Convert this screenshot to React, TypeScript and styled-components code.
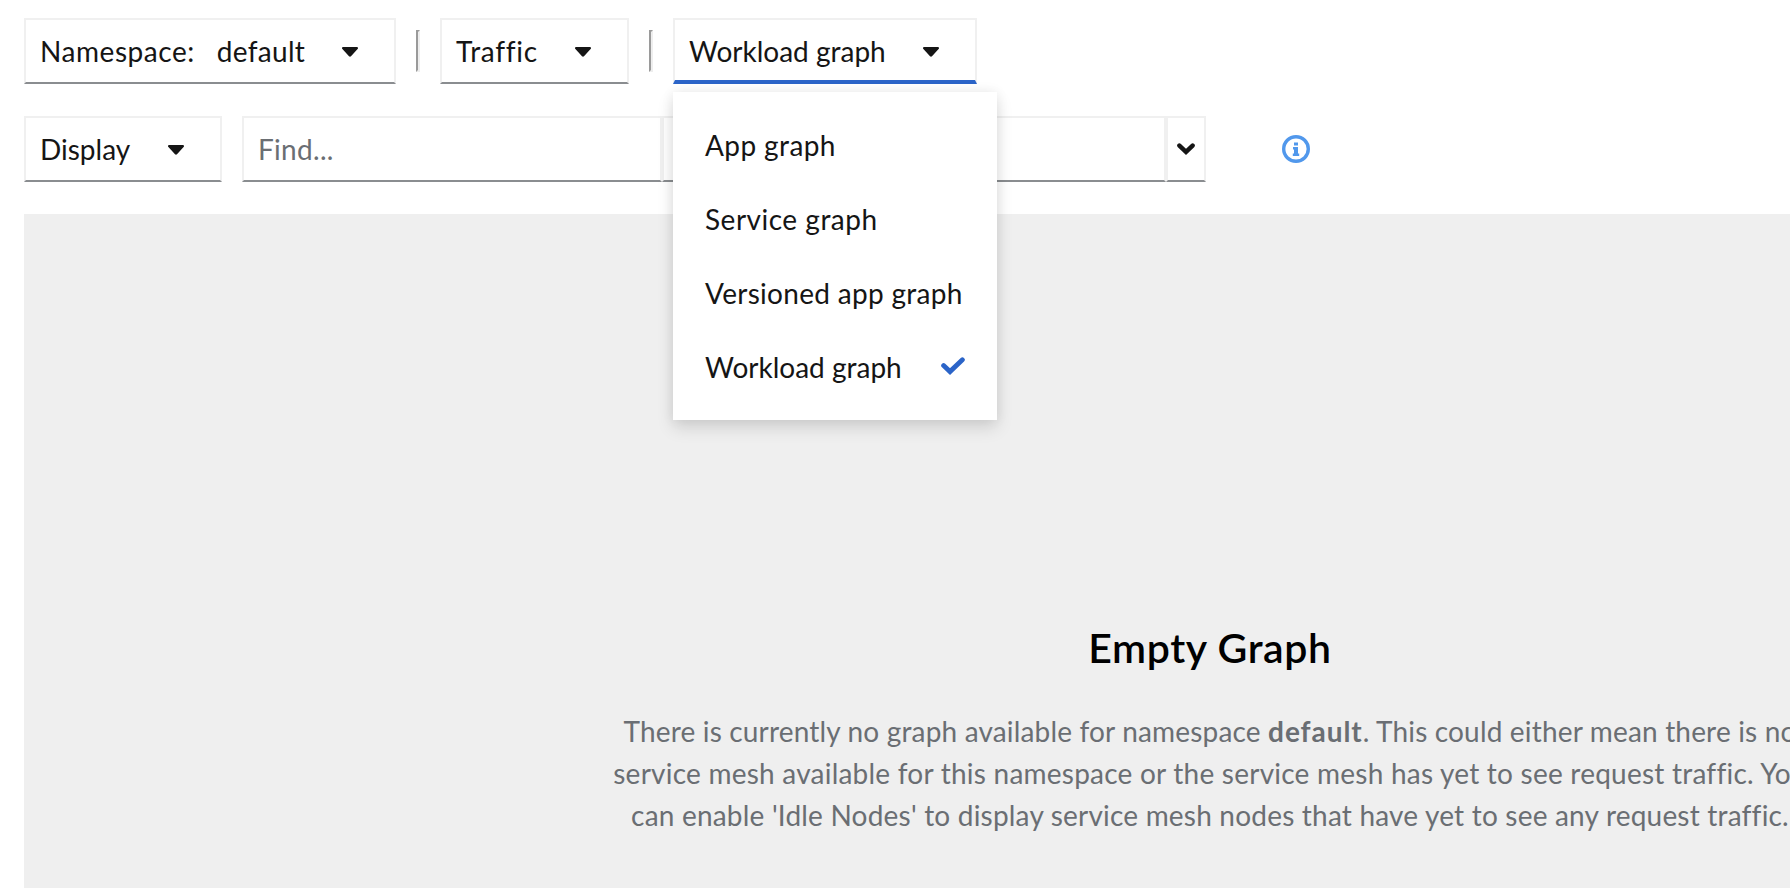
import React from 'react';
import styled, { createGlobalStyle } from 'styled-components';

const Global = createGlobalStyle`
  * { box-sizing: border-box; }
  html, body { margin: 0; height: 100%; overflow: hidden; background: #fff; }
  body { font-family: 'Lato', 'Liberation Sans', sans-serif; font-size: 28px; line-height: 42px; color: #151515; }
`;
const Page = styled.div`
  width: 1790px; height: 888px; padding: 18px 0 0 24px; overflow: hidden;
  display: flex; flex-direction: column;
`;
const Row = styled.div`display: flex; align-items: center; height: 66px; margin-bottom: 32px;`;
const Select = styled.div<{ $w: number; $open?: boolean }>`
  position: relative; flex: none; width: ${p => p.$w}px; height: 66px; background: #fff;
  border: 2px solid #f0f0f0;
  border-bottom: ${p => (p.$open ? '4px solid #2b64c8' : '2px solid #8a8d90')};
  padding: 10px 36px 0 14px; display: flex; align-items: flex-start; justify-content: space-between;
`;
const SelectText = styled.span<{ $ls: number }>`
  white-space: nowrap; letter-spacing: ${p => p.$ls}px;
`;
const SelectValue = styled(SelectText)`margin-left: 22px; margin-right: auto;`;
const CaretSvg = styled.svg`display: block; flex: none; margin-top: 17px;`;
const Caret = () => (
  <CaretSvg width="16" height="10" viewBox="0 0 16 10">
    <path d="M1.3 0H14.7C15.9 0 16.4 1.3 15.6 2.1L9 9.2C8.4 9.8 7.6 9.8 7 9.2L.4 2.1C-.4 1.3.1 0 1.3 0Z" fill="#151515" />
  </CaretSvg>
);
const Divider = styled.div`
  width: 4px; height: 42px; margin: 0 20px; flex: none;
  border: 2px solid; border-color: #9a9a9a #eeeeee #eeeeee #9a9a9a;
`;
const Menu = styled.div`
  position: absolute; z-index: 2; left: -2px; top: 72px; width: 324px; padding: 16px 0; background: #fff;
  box-shadow: 0 8px 16px rgba(3, 3, 3, 0.12), 0 0 12px rgba(3, 3, 3, 0.07);
`;
const MenuItem = styled.div<{ $ls: number }>`
  height: 74px; padding: 16px 32px; display: flex; justify-content: space-between;
  white-space: nowrap; letter-spacing: ${p => p.$ls}px;
`;
const CheckSvg = styled.svg`display: block; flex: none; margin-top: 11px;`;
const Field = styled.div<{ $w: number }>`
  flex: none; width: ${p => p.$w}px; height: 66px; padding: 10px 14px; color: #6a6e73;
  border: 2px solid #f0f0f0; border-bottom-color: #8a8d90; letter-spacing: 0.3px;
`;
const FieldToggle = styled(Field)`padding: 25px 9px;`;
const ChevronSvg = styled.svg`display: block;`;
const FieldGroup = styled.div`display: flex; margin-left: 20px;`;
const Info = styled.svg`display: block; margin-left: 76px;`;
const Canvas = styled.main`
  flex: 1; background: #efefef; padding-top: 408px; display: flex; flex-direction: column; align-items: flex-start;
`;
const Empty = styled.section`
  width: 1200px; margin-left: 586px; text-align: center;
  display: flex; flex-direction: column; align-items: center;
`;
const Title = styled.h1`
  margin: 0 0 36px; font-size: 41px; line-height: 52px; font-weight: 600; color: #000; letter-spacing: 0.6px;
`;
const Line = styled.div<{ $ls: number }>`
  white-space: nowrap; color: #6a6e73; letter-spacing: ${p => p.$ls}px;
`;
const Strong = styled.b`letter-spacing: 0.95px;`;

export default function App() {
  return (
    <>
      <Global />
      <Page>
        <Row>
          <Select $w={372}>
            <SelectText $ls={0.55}>Namespace:</SelectText>
            <SelectValue $ls={0.3}>default</SelectValue>
            <Caret />
          </Select>
          <Divider />
          <Select $w={189}><SelectText $ls={0.7}>Traffic</SelectText><Caret /></Select>
          <Divider />
          <Select $w={304} $open>
            <SelectText $ls={0}>Workload graph</SelectText>
            <Caret />
            <Menu>
              <MenuItem $ls={0.4}>App graph</MenuItem>
              <MenuItem $ls={0.5}>Service graph</MenuItem>
              <MenuItem $ls={0.3}>Versioned app graph</MenuItem>
              <MenuItem $ls={0}>
                Workload graph
                <CheckSvg width="24" height="18" viewBox="0 0 24 18">
                  <path d="M2.6 8.6L9 14.6L21.4 2.8" fill="none" stroke="#2b64c8" strokeWidth="4.8" strokeLinecap="round" />
                </CheckSvg>
              </MenuItem>
            </Menu>
          </Select>
        </Row>
        <Row>
          <Select $w={198}><SelectText $ls={0}>Display</SelectText><Caret /></Select>
          <FieldGroup>
            <Field $w={420}>Find...</Field>
            <Field $w={504} />
            <FieldToggle $w={40}>
              <ChevronSvg width="18" height="12" viewBox="0 0 18 12">
                <path d="M2.4 2.6L9 8.8L15.6 2.6" fill="none" stroke="#151515" strokeWidth="4.5" strokeLinecap="round" />
              </ChevronSvg>
            </FieldToggle>
          </FieldGroup>
          <Info width="28" height="28" viewBox="0 0 28 28">
            <circle cx="14" cy="14" r="12.3" fill="none" stroke="#5198ec" strokeWidth="3.4" />
            <path d="M12 7.4H16V10.4H12ZM11 12H16V18.6H17.2V21H10.8V18.6H12V14.4H11Z" fill="#5198ec" />
          </Info>
        </Row>
        <Canvas>
          <Empty>
            <Title>Empty Graph</Title>
            <Line $ls={0.17}>There is currently no graph available for namespace <Strong>default</Strong>. This could either mean there is no</Line>
            <Line $ls={0.23}>service mesh available for this namespace or the service mesh has yet to see request traffic. You</Line>
            <Line $ls={0.2}>can enable 'Idle Nodes' to display service mesh nodes that have yet to see any request traffic.</Line>
          </Empty>
        </Canvas>
      </Page>
    </>
  );
}
